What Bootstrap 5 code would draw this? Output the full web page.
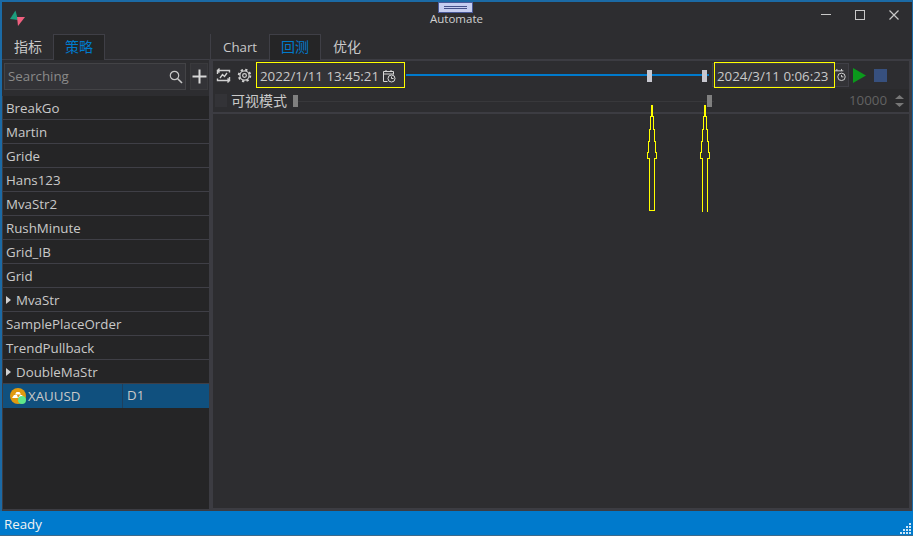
<!DOCTYPE html>
<html lang="zh">
<head>
  <meta charset="UTF-8" />
  <meta name="viewport" content="width=device-width, initial-scale=1.0"/>
  <title>Automate</title>
  <link href="https://cdn.jsdelivr.net/npm/bootstrap@5.3.3/dist/css/bootstrap.min.css" rel="stylesheet">
  <style>
    html, body { height: 100%; overflow: hidden; background: #2d2d30; }
    body { font-family: "Open Sans", "Noto Sans CJK SC", sans-serif; font-size: 13.3px; color: #c9c9c9; }
    .app-win { height: 536px; border-top: 2px solid #1b6aa5; border-left: 2px solid #1b6aa5; border-right: 1px solid #1b6aa5; position: relative; }
    .title-bar { height: 32px; position: relative; padding: 6px 0 0 7px; }
    .app-logo { display: block; }
    .app-title { position: absolute; left: 428px; top: 9px; font-size: 11.5px; line-height: 16px; color: #d0d0d0; }
    .drag-tab { position: absolute; left: 436px; top: 0; width: 35px; height: 11px; background: #c5cdf0; border: 1px solid #4a5a9a; }
    .drag-tab::after { content: ""; position: absolute; left: 5px; right: 5px; top: 3px; height: 3px; border-top: 1px solid #44508a; border-bottom: 1px solid #44508a; }
    .win-btns { position: absolute; right: 12px; top: 7px; gap: 22px; }
    .main-area { height: 477px; }
    .left-pane { width: 207px; background: #3c3c42; }
    .right-pane { width: 703px; position: relative; }
    .left-top { background: #2d2d30; }
    .tab-row { height: 26px; border-bottom: 1px solid #3f3f46; }
    .tab-item { padding: 0 11px; line-height: 24px; height: 26px; border: 1px solid transparent; border-bottom: 0; }
    .cjk-text { font-size: 14px; }
    .tab-on { color: #007acc; background: #252526; border-color: #3f3f46; margin-bottom: -1px; }
    .left-tab-on { margin-left: -1px; }
    .search-row { height: 36px; padding: 3px 0 0 2px; gap: 4px; }
    .search-box { width: 182px; height: 27px; background: #333337; border: 1px solid #434346; color: #8a8a8a; padding: 1px 2px 0 3px; }
    .add-btn { width: 18px; height: 27px; background: #333337; border: 1px solid #3a3a3d; }
    .strat-list { width: 206px; height: 413px; margin-left: 1px; background: #252526; }
    .strat-row { height: 24px; line-height: 23px; padding: 1px 0 0 3px; border-bottom: 1px solid #3f3f46; }
    .strat-sel { background: #10507e; border-bottom: 0; padding: 0; }
    .tri { width: 0; height: 0; border-left: 5px solid #d0d0d0; border-top: 4px solid transparent; border-bottom: 4px solid transparent; margin-right: 5px; }
    .sym-cell { width: 120px; border-right: 1px solid #1f3f5c; }
    .tf-cell { padding-left: 4px; }
    .coin { margin: 0 1px 0 7px; }
    .right-tab-row { height: 25px; border-bottom: 0; border-left: 1px solid #3f3f46; margin-left: 1px; }
    .right-body { border-style: solid; border-color: #3c3c42; border-width: 2px 3px 3px 4px; }
    .tool-row { height: 28px; padding-left: 3px; }
    .tool-ico { margin-right: 6px; flex: none; }
    .date-field { height: 26px; white-space: nowrap; }
    .date-a { width: 149px; margin-left: -2px; padding: 1px 0 0 3px; background: #333337; }
    .date-wrap { width: 137px; height: 24px; padding-left: 1px; background: #333337; border: 1px solid #3f3f46; }
    .date-b { width: 121px; padding: 1px 0 0 2px; margin-top: -2px; margin-bottom: -2px; flex: none; }
    .yellow-box { border: 1px solid #ffff00; line-height: 24px; }
    .range-track { width: 307px; position: relative; height: 26px; }
    .range-line { position: absolute; left: 1px; right: 3px; top: 12px; height: 2px; background: #007acc; }
    .range-knob { position: absolute; top: 8px; width: 5px; height: 12px; background: #c8c8d0; }
    .opt-row { height: 25px; border-bottom: 2px solid #3c3c42; padding-left: 2px; }
    .opt-check { width: 12px; height: 13px; background: #333337; margin-right: 4px; }
    .opt-track { position: relative; width: 421px; height: 12px; margin-left: 6px; }
    .opt-track::before { content: ""; position: absolute; left: 0; right: 0; top: 6px; height: 1px; background: #38383b; }
    .opt-knob { position: absolute; top: 0; width: 5px; height: 12px; background: #808080; }
    .num-box { width: 79px; height: 23px; background: #2a2a2c; color: #626262; margin-left: auto; padding-right: 5px; }
    .chart-area { height: 394px; }
    .arrow-layer { position: absolute; left: 0; top: 0; pointer-events: none; }
    .status-bar { position: absolute; left: -2px; right: -1px; bottom: 0; height: 25px; line-height: 26px; background: #007acc; color: #f2f2f2; padding-left: 4px; border-bottom: 1px solid #3c6a8c; }
    .grip-dots { position: absolute; right: 1px; bottom: 1px; }
  </style>
</head>
<body>

<div class="app-win">
  <div class="title-bar">
    <svg class="app-logo" width="18" height="18" viewBox="0 0 18 18">
      <polygon points="6.500,2.500 1,11 9,12" fill="#1c9c7c"/>
      <polygon points="8,9 16,9 9,18" fill="#f0607f"/>
    </svg>
    <div class="drag-tab"></div>
    <div class="app-title">Automate</div>
    <div class="win-btns d-flex align-items-center">
      <svg width="12" height="12" viewBox="0 0 12 12"><path d="M1 5.500H11" stroke="#c8c8c8"/></svg>
      <svg width="12" height="12" viewBox="0 0 12 12"><rect x="1.500" y="1.500" width="9" height="9" fill="none" stroke="#c8c8c8"/></svg>
      <svg width="12" height="12" viewBox="0 0 12 12"><path d="M1.500 1.500L10.500 10.500M10.500 1.500L1.500 10.500" stroke="#c8c8c8" stroke-width="1.200"/></svg>
    </div>
  </div>

  <div class="main-area d-flex">
    <div class="left-pane">
      <div class="left-top">
        <div class="tab-row d-flex">
          <div class="tab-item cjk-text">指标</div>
          <div class="tab-item cjk-text tab-on left-tab-on">策略</div>
        </div>
        <div class="search-row d-flex">
          <div class="search-box d-flex align-items-center justify-content-between">
            <span>Searching</span>
            <svg width="14" height="14" viewBox="0 0 14 14"><circle cx="5.500" cy="5.500" r="4.200" fill="none" stroke="#c8c8c8" stroke-width="1.200"/><path d="M8.700 8.700L13 13" stroke="#c8c8c8" stroke-width="1.600"/></svg>
          </div>
          <div class="add-btn d-flex align-items-center justify-content-center">
            <svg width="15" height="15" viewBox="0 0 15 15"><path d="M7.500 0.500V14.500M0.500 7.500H14.500" stroke="#d8d8d8" stroke-width="2"/></svg>
          </div>
        </div>
      </div>
      <div class="strat-list">
        <div class="strat-row">BreakGo</div>
        <div class="strat-row">Martin</div>
        <div class="strat-row">Gride</div>
        <div class="strat-row">Hans123</div>
        <div class="strat-row">MvaStr2</div>
        <div class="strat-row">RushMinute</div>
        <div class="strat-row">Grid_IB</div>
        <div class="strat-row">Grid</div>
        <div class="strat-row d-flex align-items-center"><span class="tri"></span>MvaStr</div>
        <div class="strat-row">SamplePlaceOrder</div>
        <div class="strat-row">TrendPullback</div>
        <div class="strat-row d-flex align-items-center"><span class="tri"></span>DoubleMaStr</div>
        <div class="strat-row strat-sel d-flex">
          <div class="sym-cell d-flex align-items-center">
            <svg class="coin" width="17" height="17" viewBox="0 0 17 17">
              <circle cx="8" cy="8" r="8" fill="#e09a10"/>
              <path d="M2 10L4 7H7L8 10ZM8 10L10 7H12L14 10ZM5 6.500L6.500 4H9.500L11 6.500Z" fill="#fff"/>
              <circle cx="12" cy="12" r="4" fill="#5fe88a"/>
            </svg>XAUUSD
          </div>
          <div class="tf-cell">D1</div>
        </div>
      </div>
    </div>

    <div class="right-pane">
      <div class="tab-row right-tab-row d-flex">
        <div class="tab-item">Chart</div>
        <div class="tab-item cjk-text tab-on">回测</div>
        <div class="tab-item cjk-text">优化</div>
      </div>
      <div class="right-body">
        <div class="tool-row d-flex align-items-center">
          <svg class="tool-ico" width="15" height="15" viewBox="0 0 15 15" fill="none" stroke="#d0d0d0" stroke-width="1.400">
            <path d="M1.500 6V2.500H13.500V4.500M3.500 0.500L1.500 2.500L3.500 4.500M13.500 9V12.500H1.500V10.500M11.500 10.500L13.500 12.500L11.500 14.500M4 10L6.500 6.500L8.500 8.500L11 5"/>
          </svg>
          <svg class="tool-ico" width="15" height="15" viewBox="0 0 16 16" fill="none" stroke="#d0d0d0">
            <circle cx="8" cy="8" r="6.200" stroke-width="2" stroke-dasharray="2.400 2.470"/>
            <circle cx="8" cy="8" r="4.900" stroke-width="1.300"/>
            <circle cx="8" cy="8" r="2" stroke-width="1.300"/>
          </svg>
          <div class="yellow-box date-field date-a d-flex align-items-center">
            <span>2022/1/11 13:45:21</span>
            <svg class="ms-auto me-2" width="14" height="14" viewBox="0 0 14 14" fill="none" stroke="#d8d8d8">
              <path d="M5.500 12.500H1.500V2.500H11.500V5.500M1.500 5H11.500M4 1V3M9 1V3"/><circle cx="9.500" cy="9.500" r="3.500"/><path d="M9.500 7.500V9.500H11.500"/>
            </svg>
          </div>
          <div class="range-track">
            <div class="range-line"></div>
            <div class="range-knob" style="left:242px"></div>
            <div class="range-knob" style="left:297px"></div>
          </div>
          <div class="date-wrap d-flex align-items-center">
            <div class="yellow-box date-field date-b">2024/3/11 0:06:23</div>
            <svg width="14" height="16" viewBox="0 0 14 16" fill="none" stroke="#d8d8d8">
              <path d="M0 3.500H9M2 1.500V3.500M7 1.500V3.500"/><circle cx="7" cy="10" r="4"/><path d="M7 8V10H9"/>
            </svg>
          </div>
          <svg class="tool-play" width="13" height="15" viewBox="0 0 13 15" style="margin-left:4px"><polygon points="0,0 13,7.500 0,15" fill="#0b9a1c"/></svg>
          <svg width="13" height="13" viewBox="0 0 13 13" style="margin-left:8px"><rect width="13" height="13" fill="#37507e"/></svg>
        </div>
        <div class="opt-row d-flex align-items-center">
          <div class="opt-check"></div>
          <span class="cjk-text">可视模式</span>
          <div class="opt-track">
            <div class="opt-knob" style="left:0"></div>
            <div class="opt-knob" style="left:414px"></div>
          </div>
          <div class="num-box d-flex align-items-center justify-content-end">
            <span class="me-2">10000</span>
            <svg width="9" height="14" viewBox="0 0 9 14"><path d="M0 5L4.500 1L9 5ZM0 9H9L4.500 13Z" fill="#777"/></svg>
          </div>
        </div>
        <div class="chart-area"></div>
      </div>
      <svg class="arrow-layer" width="703" height="477" viewBox="209 34 703 477" fill="none" stroke="#ffff00" shape-rendering="crispEdges">
        <path d="M652 105V116" stroke-width="2"/>
        <path d="M650.500 116.500H653.500V129.500H654.500V141.500H655.500V152.500H656.500V158.500H654.500V210.500H649.500V158.500H647.500V152.500H648.500V141.500H649.500V129.500H650.500Z"/>
        <path d="M705 105V116" stroke-width="2"/>
        <path d="M702.500 212V158.500H700.500V152.500H701.500V141.500H702.500V129.500H703.500V116.500H706.500V129.500H707.500V141.500H708.500V152.500H709.500V158.500H707.500V212"/>
      </svg>
    </div>
  </div>
  <div class="status-bar">Ready
    <svg class="grip-dots" width="12" height="12" viewBox="0 0 12 12" fill="#cfe6f7">
      <rect x="9" y="1" width="2" height="2"/><rect x="6" y="4" width="2" height="2"/><rect x="9" y="4" width="2" height="2"/>
      <rect x="3" y="7" width="2" height="2"/><rect x="6" y="7" width="2" height="2"/><rect x="9" y="7" width="2" height="2"/>
      <rect x="0" y="10" width="2" height="2"/><rect x="3" y="10" width="2" height="2"/><rect x="6" y="10" width="2" height="2"/><rect x="9" y="10" width="2" height="2"/>
    </svg>
  </div>
</div>

<script src="https://cdn.jsdelivr.net/npm/bootstrap@5.3.3/dist/js/bootstrap.bundle.min.js"></script>
</body>
</html>
